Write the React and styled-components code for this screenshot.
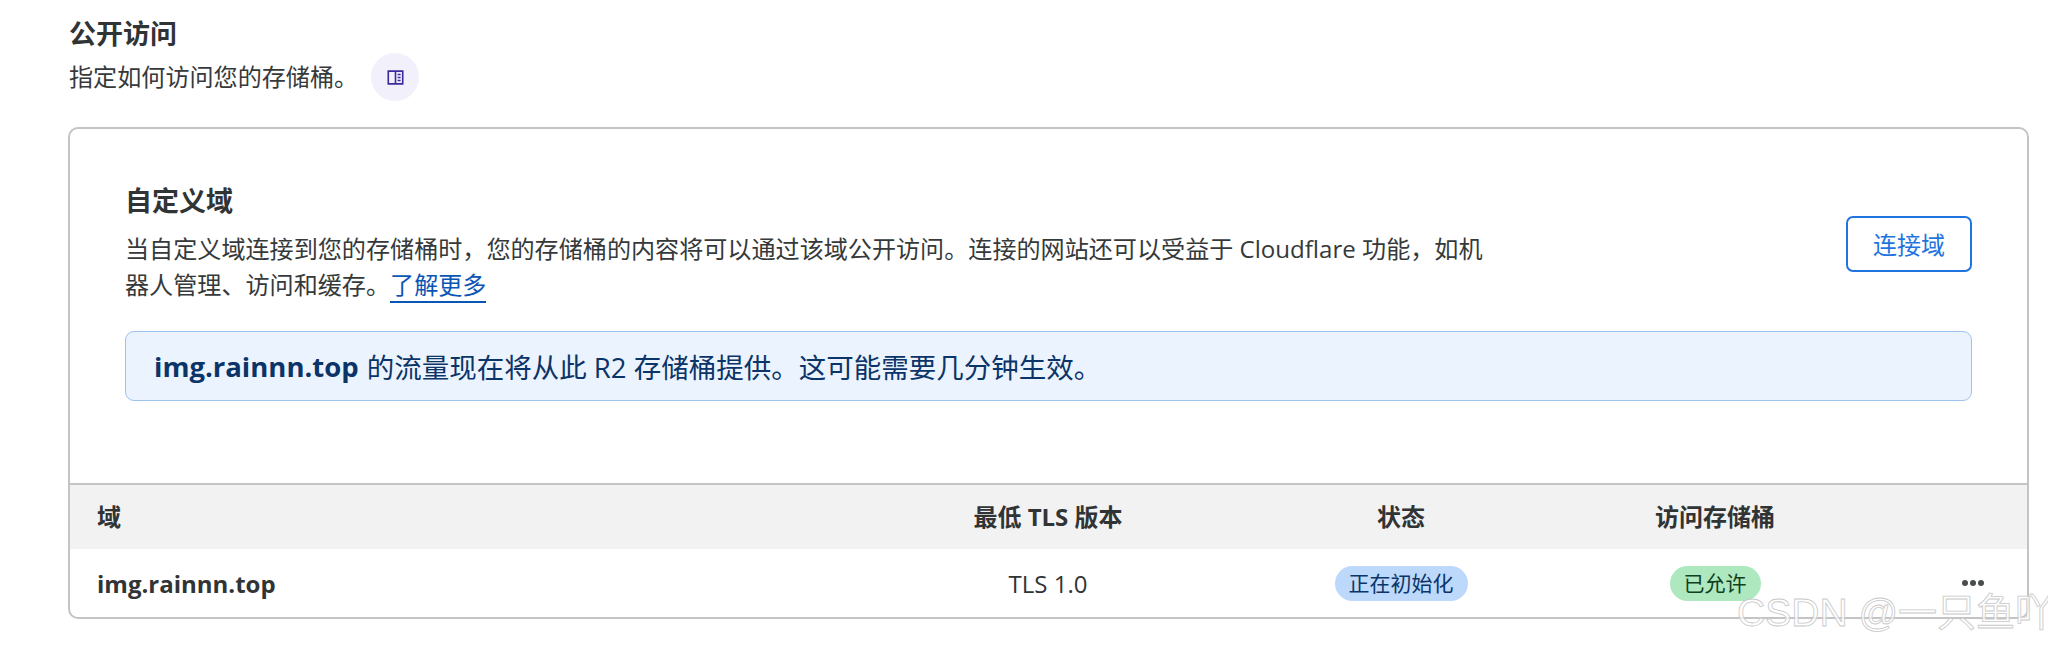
import styled, { createGlobalStyle } from 'styled-components'

const GlobalStyle = createGlobalStyle`
  html, body {
    margin: 0;
    background: #fff;
  }
  body {
    font-family: "Open Sans", "Noto Sans CJK SC", sans-serif;
    color: #36393a;
  }
`

const Page = styled.div`
  position: relative;
  width: 2048px;
  height: 646px;
  padding: 17px 19px 0 68px;
  box-sizing: border-box;
  overflow: hidden;
`

const Title = styled.h2`
  margin: 0 0 0 1px;
  font-size: 27px;
  line-height: 34px;
  font-weight: 700;
  color: #313435;
`

const SubRow = styled.div`
  display: flex;
  align-items: center;
  gap: 13px;
  height: 48px;
  margin: 2px 0 0 1px;
  font-size: 24.1px;
`

const SubText = styled.span`
  padding-bottom: 3px;
`

const IconCircle = styled.span`
  display: flex;
  align-items: center;
  justify-content: center;
  width: 48px;
  height: 48px;
  border-radius: 50%;
  background: #f2f0fb;
`

const Card = styled.section`
  margin-top: 26px;
  border: 2px solid #c4c4c4;
  border-radius: 10px;
  overflow: hidden;
`

const Body = styled.div`
  padding: 55px 55px 82px 55px;
`

const Intro = styled.div`
  display: flex;
  justify-content: space-between;
  align-items: center;
`

const IntroText = styled.div`
  width: 1370px;
`

const CardTitle = styled.h3`
  margin: 0 0 13px;
  font-size: 27px;
  line-height: 34px;
  font-weight: 700;
  color: #313435;
`

const Para = styled.p`
  margin: 0;
  font-size: 24.1px;
  line-height: 36px;
`

const LearnMore = styled.a`
  color: #0a56b5;
  text-decoration: none;
  border-bottom: 2px solid #0a56b5;
`

const ConnectButton = styled.button`
  width: 126px;
  height: 56px;
  border: 2px solid #1f74e0;
  border-radius: 7px;
  background: #fff;
  color: #1f74e0;
  font: inherit;
  font-size: 24px;
`

const Banner = styled.div`
  display: flex;
  align-items: center;
  gap: 8px;
  height: 70px;
  margin-top: 28px;
  padding: 0 28px;
  box-sizing: border-box;
  border: 1px solid #9cc3ee;
  border-radius: 9px;
  background: #ebf3fe;
  color: #0b3468;
  font-size: 27.5px;
`

const TableRow = styled.div`
  display: grid;
  grid-template-columns: 773px 356px 350px 278px 1fr;
  align-items: center;
  box-sizing: content-box;
  height: ${(p) => p.$height}px;
  padding-left: 27px;
  font-size: 24px;
  color: #313435;
`

const HeadRow = styled(TableRow)`
  height: 61px;
  padding-bottom: 3px;
  background: #f2f2f2;
  border-top: 2px solid #c4c4c4;
  font-weight: 700;
`

const NameCell = styled.div`
  font-weight: 700;
`

const CenterCell = styled.div`
  display: flex;
  justify-content: center;
`

const Badge = styled.span`
  display: block;
  height: 35px;
  line-height: 35px;
  padding: 0 14px;
  border-radius: 18px;
  font-size: 21px;
  background: ${(p) => p.$bg};
  color: ${(p) => p.$fg};
`

const DotsCell = styled.div`
  display: flex;
  justify-content: flex-end;
  gap: 2px;
  padding-right: 43px;
`

const Dot = styled.i`
  width: 6px;
  height: 6px;
  border-radius: 50%;
  background: #4a4d4e;
`

const Watermark = styled.div`
  position: absolute;
  right: -6px;
  bottom: 11px;
  font-family: "Liberation Sans", "Noto Sans CJK SC", sans-serif;
  font-size: 39px;
  line-height: 44px;
  white-space: nowrap;
  color: rgba(255, 255, 255, 0.75);
  -webkit-text-stroke: 0.8px #c8c8c8;
`

function BookIcon() {
  return (
    <svg width="17" height="17" viewBox="0 0 20 20" fill="none" stroke="#3b2a9c" strokeWidth="1.9">
      <path d="M1.5 2.5h17v15h-17z" />
      <path d="M10 2.5v15" />
      <path d="M12.5 6.5h3.5M12.5 10h3.5M12.5 13.5h3.5" strokeWidth="1.6" />
    </svg>
  )
}

export default function App() {
  return (
    <Page>
      <GlobalStyle />
      <Title>公开访问</Title>
      <SubRow>
        <SubText>指定如何访问您的存储桶。</SubText>
        <IconCircle>
          <BookIcon />
        </IconCircle>
      </SubRow>
      <Card>
        <Body>
          <Intro>
            <IntroText>
              <CardTitle>自定义域</CardTitle>
              <Para>
                当自定义域连接到您的存储桶时，您的存储桶的内容将可以通过该域公开访问。连接的网站还可以受益于 Cloudflare 功能，如机器人管理、访问和缓存。<LearnMore>了解更多</LearnMore>
              </Para>
            </IntroText>
            <ConnectButton>连接域</ConnectButton>
          </Intro>
          <Banner>
            <b>img.rainnn.top</b>
            <span>的流量现在将从此 R2 存储桶提供。这可能需要几分钟生效。</span>
          </Banner>
        </Body>
        <HeadRow>
          <div>域</div>
          <CenterCell>最低 TLS 版本</CenterCell>
          <CenterCell>状态</CenterCell>
          <CenterCell>访问存储桶</CenterCell>
          <div />
        </HeadRow>
        <TableRow $height={68}>
          <NameCell>img.rainnn.top</NameCell>
          <CenterCell>TLS 1.0</CenterCell>
          <CenterCell>
            <Badge $bg="#bcd8fb" $fg="#0b3468">正在初始化</Badge>
          </CenterCell>
          <CenterCell>
            <Badge $bg="#aee8bf" $fg="#10401f">已允许</Badge>
          </CenterCell>
          <DotsCell>
            <Dot />
            <Dot />
            <Dot />
          </DotsCell>
        </TableRow>
      </Card>
      <Watermark>CSDN @一只鱼吖</Watermark>
    </Page>
  )
}
